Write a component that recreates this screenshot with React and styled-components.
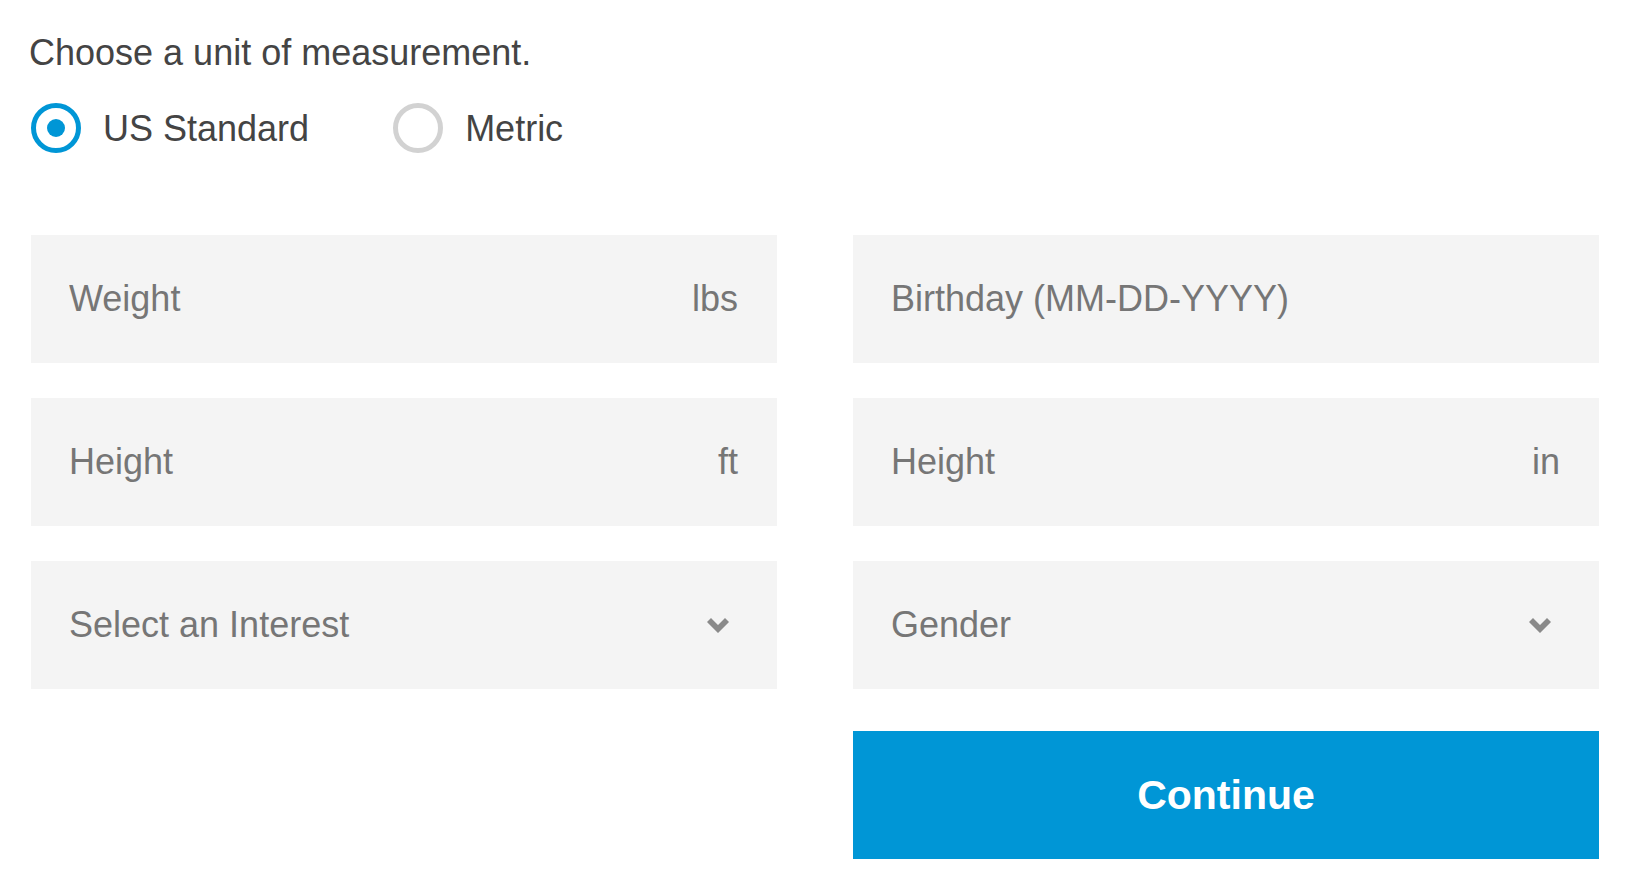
import React, { useState } from 'react';
import styled, { createGlobalStyle } from "styled-components";

const GlobalStyle = createGlobalStyle`
  html, body {
    margin: 0;
    padding: 0;
    background: #ffffff;
  }
  body {
    font-family: "Helvetica Neue", "Liberation Sans", Arial, sans-serif;
  }
`;

const units = [
  { value: "us", label: "US Standard" },
  { value: "metric", label: "Metric" }
];

const fields = [
  { name: "weight", placeholder: "Weight", unit: "lbs" },
  { name: "birthday", placeholder: "Birthday (MM-DD-YYYY)" },
  { name: "heightFt", placeholder: "Height", unit: "ft" },
  { name: "heightIn", placeholder: "Height", unit: "in" },
  { name: "interest", placeholder: "Select an Interest", select: true },
  { name: "gender", placeholder: "Gender", select: true }
];

function Chevron() {
  return (
    <ChevronSvg width="22" height="16" viewBox="0 0 22 16">
      <path d="M0 5 L4 1 L11 8 L18 1 L22 5 L11 16 Z" fill="#8a8a8a" />
    </ChevronSvg>
  );
}

function App() {
  const [unit, setUnit] = useState("us");

  return (
    <Page>
      <GlobalStyle />
      <Title>Choose a unit of measurement.</Title>
      <RadioGroup>
        {units.map((u) => (
          <RadioOption key={u.value} onClick={() => setUnit(u.value)}>
            <RadioCircle $checked={unit === u.value}>
              {unit === u.value && <RadioDot />}
            </RadioCircle>
            <RadioLabel>{u.label}</RadioLabel>
          </RadioOption>
        ))}
      </RadioGroup>

      <Form>
        {fields.map((f) => (
          <Field key={f.name}>
            {f.select ? (
              <>
                <SelectText>{f.placeholder}</SelectText>
                <Chevron />
              </>
            ) : (
              <>
                <Input placeholder={f.placeholder} />
                {f.unit && <Unit>{f.unit}</Unit>}
              </>
            )}
          </Field>
        ))}
      </Form>
      <Actions>
        <Button type="button">Continue</Button>
      </Actions>
    </Page>
  );
}

const Page = styled.main`
  padding: 32px 30px 0 31px;
`;

const Title = styled.p`
  margin: 0 0 0 -2px;
  font-size: 36px;
  line-height: 41px;
  color: #444444;
`;

const RadioGroup = styled.div`
  display: flex;
  gap: 84px;
  margin-top: 30px;
`;

const RadioOption = styled.label`
  display: flex;
  align-items: center;
  gap: 22px;
  cursor: pointer;
`;

const RadioCircle = styled.span`
  box-sizing: border-box;
  width: 50px;
  height: 50px;
  border-radius: 50%;
  border: 5px solid ${(p) => (p.$checked ? "#0096d6" : "#d2d2d2")};
  display: flex;
  align-items: center;
  justify-content: center;
`;

const RadioDot = styled.span`
  width: 18px;
  height: 18px;
  border-radius: 50%;
  background: #0096d6;
`;

const RadioLabel = styled.span`
  font-size: 36px;
  line-height: 48px;
  padding-top: 2px;
  color: #444444;
`;

const Form = styled.div`
  display: grid;
  grid-template-columns: 1fr 1fr;
  grid-auto-rows: 128px;
  column-gap: 76px;
  row-gap: 35px;
  margin-top: 82px;
`;

const Field = styled.div`
  display: flex;
  align-items: center;
  background: #f4f4f4;
  padding: 0 39px 0 38px;
  font-size: 36px;
  color: #767676;
`;

const Input = styled.input`
  flex: 1;
  min-width: 0;
  border: none;
  outline: none;
  background: transparent;
  padding: 0;
  font-family: inherit;
  font-size: 36px;
  color: #444444;
  &::placeholder {
    color: #767676;
    opacity: 1;
  }
`;

const Unit = styled.span`
  color: #767676;
`;

const SelectText = styled.span`
  flex: 1;
`;

const ChevronSvg = styled.svg`
  margin-right: 9px;
  margin-top: -1px;
`;

const Actions = styled.div`
  display: grid;
  grid-template-columns: 1fr 1fr;
  column-gap: 76px;
  margin-top: 42px;
`;

const Button = styled.button`
  grid-column: 2;
  box-sizing: border-box;
  height: 128px;
  padding: 0;
  border: none;
  background: #0096d6;
  color: #ffffff;
  font-family: inherit;
  font-size: 41px;
  font-weight: 700;
  cursor: pointer;
`;

export default App;
